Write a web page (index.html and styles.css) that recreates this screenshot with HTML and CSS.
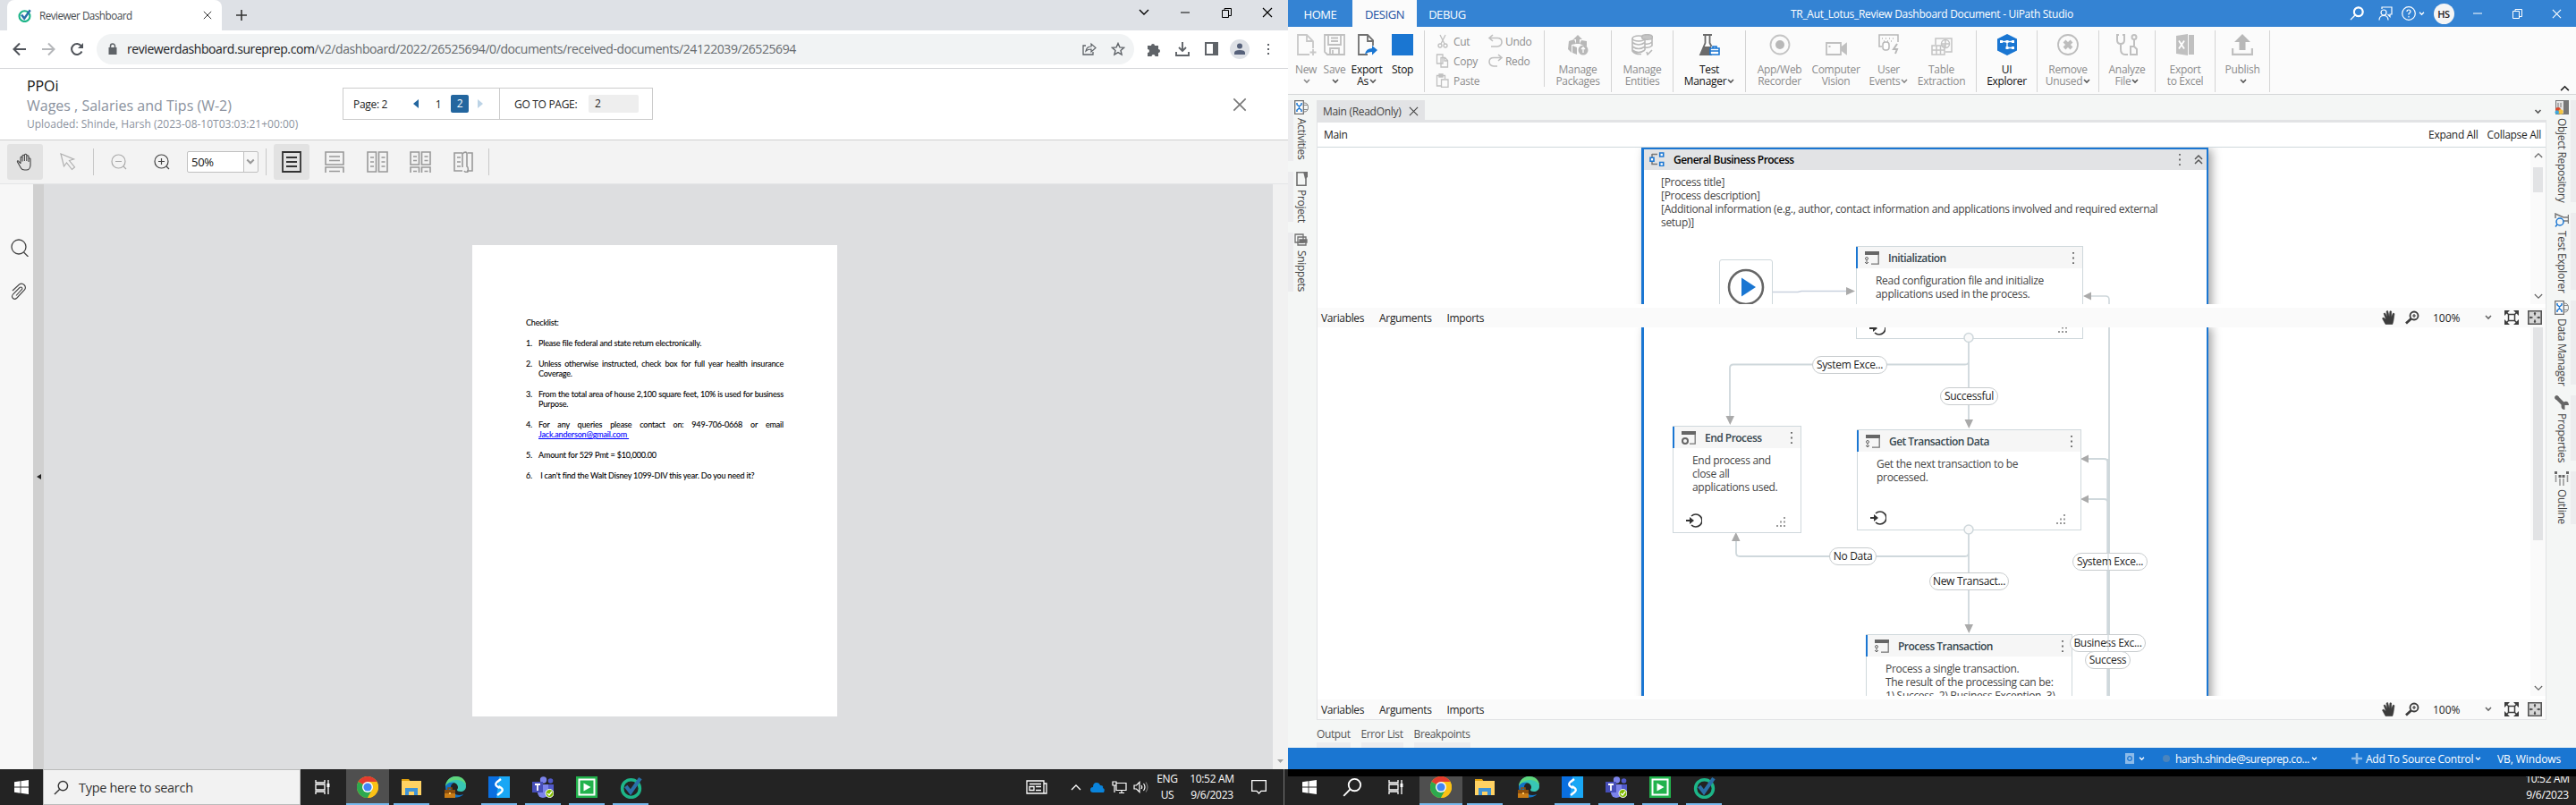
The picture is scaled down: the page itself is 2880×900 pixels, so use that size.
FILE: index.html
```html
<!DOCTYPE html>
<html lang="en">
<head>
<meta charset="utf-8">
<title>Desktop</title>
<link rel="stylesheet" href="styles.css">
</head>
<body>
<svg class="sprite" aria-hidden="true">
  <symbol id="sure" viewBox="0 0 24 24"><circle cx="12" cy="13" r="9.5" fill="none" stroke="#1db588" stroke-width="3.4"/><path d="M6.5 10.5l5 6.5L22 2" fill="none" stroke="#2a6fa8" stroke-width="4"/></symbol>
  <symbol id="win" viewBox="0 0 16 16"><path fill="#fff" d="M0 2.2L6.6 1.3V7.6H0zM7.4 1.2L16 0V7.6H7.4zM0 8.4H6.6V14.7L0 13.8zM7.4 8.4H16V16L7.4 14.8z"/></symbol>
  <symbol id="taskview" viewBox="0 0 18 16"><path d="M1 0v3h10V0M1 16v-3h10v3M1 5h10v6H1zM15 0v16" fill="none" stroke="#fff" stroke-width="1.3"/><path d="M13.5 4h3v4h-3z" fill="#fff"/></symbol>
  <symbol id="chrome" viewBox="0 0 24 24"><circle cx="12" cy="12" r="12" fill="#fbc116"/><path d="M12 12L1.6 6A12 12 0 0 1 22.4 6z" fill="#e33b2e"/><path d="M1.6 6A12 12 0 0 0 12 24L17 15l-5-3z" fill="#2da94f"/><path d="M12 6h10.4A12 12 0 0 1 12 24l5.2-9z" fill="#fbc116"/><circle cx="12" cy="12" r="6" fill="#fff"/><circle cx="12" cy="12" r="4.6" fill="#4285f4"/></symbol>
  <symbol id="folder" viewBox="0 0 24 24"><path d="M1 3h8l2 3H1z" fill="#e0a00c"/><path d="M1 5h22v16H1z" fill="#ffd263"/><path d="M5 21v-8h14v8h-4v-4H9v4z" fill="#3f93d6"/></symbol>
  <symbol id="edge" viewBox="0 0 24 24"><path d="M1 12A11.5 11.500 0 0 1 24 11c0 4-3 6-6 6s-4-1-4-2 1-1 1-3-2-5-6-5-8 3-8 8z" fill="#38c6b4"/><path d="M1 12c0-7 5-12 12-12 6 0 11 4 11 10-2-4-6-6-11-6C7 4 2 8 1 12z" fill="#5fd67c"/><path d="M1 11c2-4 6-5 10-4-4 1-5 5-3 9 2 5 8 6 13 4-3 5-20 7-20-9z" fill="#1273c4"/><path d="M0 15h12v9H0z" fill="#c97c16"/><path d="M0 15h12v4H0z" fill="#8c4f0c"/><path d="M4 15v-2h4v2" fill="none" stroke="#8c4f0c" stroke-width="1.5"/><path d="M5 18h2v2H5z" fill="#ffc45a"/></symbol>
  <symbol id="snag" viewBox="0 0 24 24"><path d="M0 0h24v24H0z" fill="#0a6fe0"/><path d="M12 0h12v24H9z" fill="#19a7f5"/><path d="M14 3l-4.500 3.500q-2.500 2.500 0 4.500l3 2M10 21l4.500-3.500q2.500-2.500 0-4.500l-3-2" fill="none" stroke="#fff" stroke-width="2.400"/></symbol>
  <symbol id="teams" viewBox="0 0 24 24"><circle cx="12.500" cy="4" r="3.700" fill="#7b83eb"/><circle cx="20.500" cy="5" r="2.800" fill="#5059c9"/><path d="M16 9h8v7a4 4 0 0 1-8 2z" fill="#5059c9"/><path d="M6 9h12v9a6 6 0 0 1-12 0z" fill="#7b83eb"/><path d="M0 6h12v12H0z" fill="#464eb8"/><path d="M3 9h6M6 9v7" stroke="#fff" stroke-width="1.800"/><circle cx="19.500" cy="19" r="4.500" fill="#7fba00" stroke="#fff"/><path d="M17 19l2 2 3-4" fill="none" stroke="#fff" stroke-width="1.300"/></symbol>
  <symbol id="play" viewBox="0 0 24 24"><path d="M0 0h24v24H0z" fill="#22b24c"/><path d="M3.500 3.500h17v17h-17z" fill="none" stroke="#fff" stroke-width="2"/><path d="M8.500 7.500l8 4.500-8 4.500z" fill="#fff"/></symbol>
  <symbol id="chev" viewBox="0 0 8 6"><path d="M1 1l3 3 3-3" fill="none" stroke="currentColor" stroke-width="1.600"/></symbol>
  <symbol id="chevbig" viewBox="0 0 12 8"><path d="M1 1l5 5 5-5" fill="none" stroke="currentColor" stroke-width="1.400"/></symbol>
  <symbol id="restore" viewBox="0 0 11 11"><path d="M.5 2.500h7v8h-7zM3 2.500V.5h7.500v8H7.500" fill="none" stroke="currentColor"/></symbol>
  <symbol id="x" viewBox="0 0 12 12"><path d="M1 1l10 10M11 1L1 11" fill="none" stroke="currentColor" stroke-width="1.200"/></symbol>
  <symbol id="lens" viewBox="0 0 18 18"><circle cx="11" cy="7" r="5.500" fill="none" stroke="currentColor" stroke-width="1.500"/><path d="M7 11l-6 6" stroke="currentColor" stroke-width="1.500"/></symbol>
  <symbol id="dots" viewBox="0 0 4 16"><path d="M1 1h2v2H1zM1 7h2v2H1zM1 13h2v2H1z" fill="currentColor"/></symbol>
  <symbol id="state" viewBox="0 0 16 16"><path d="M0 1h16v4H0z" fill="#666"/><path d="M15.200 4v11.200H7" fill="none" stroke="#777" stroke-width="1.300"/><circle cx="2" cy="9" r="1.500" fill="none" stroke="#666"/><path d="M2 10.500v4M0 13l2 2 2-2" fill="none" stroke="#666"/></symbol>
  <symbol id="endstate" viewBox="0 0 16 16"><path d="M0 1h16v4H0z" fill="#666"/><path d="M15.200 4v11.200H9" fill="none" stroke="#777" stroke-width="1.300"/><circle cx="4" cy="12" r="3" fill="none" stroke="#666" stroke-width="2"/></symbol>
  <symbol id="enter" viewBox="0 0 18 16"><path d="M6 3a7 7 0 1 1 0 10" fill="none" stroke="#333" stroke-width="1.600"/><path d="M0 7h4V4l5 4-5 4V9H0z" fill="#333"/></symbol>
  <symbol id="grip" viewBox="0 0 12 12"><path d="M9 0h2v2H9zM9 4.500h2v2H9zM9 9h2v2H9zM5 4.500h2v2H5zM5 9h2v2H5zM1 9h2v2H1z" fill="#999"/></symbol>
  <symbol id="pan" viewBox="0 0 16 16"><path d="M4 15.500L.5 9l1-1 3 2L2 3.500l1.500-.5L6 7.500 5 1l1.600-.4L8.200 7 9 .8l1.600.2-.2 6.500L12.600 3l1.400.7L12.800 12l-1 3.500z" fill="#3c3c3c" stroke="#3c3c3c" stroke-width=".6"/></symbol>
  <symbol id="zoomp" viewBox="0 0 16 16"><circle cx="10" cy="6" r="4.500" fill="none" stroke="#3c3c3c" stroke-width="1.800"/><path d="M8 6h4M10 4v4" stroke="#3c3c3c" stroke-width="1.200"/><path d="M6.500 9.500L1 14.500" stroke="#3c3c3c" stroke-width="2.800"/></symbol>
  <symbol id="fit" viewBox="0 0 16 16"><path d="M4.500 4.500h7v7h-7zM1 1l4 4M15 1l-4 4M1 15l4-4M15 15l-4-4" fill="none" stroke="#3c3c3c" stroke-width="1.500"/><path d="M0 0h6L0 6zM16 0h-6l6 6zM0 16h6l-6-6zM16 16h-6l6-6z" fill="#3c3c3c"/></symbol>
  <symbol id="overview" viewBox="0 0 16 16"><path d="M.8.800h14.400v14.400H.8z" fill="#d6d6d6" stroke="#555" stroke-width="1.600"/><path d="M8 2.500v3M8 10.500v3M2.500 8h3M10.500 8h3" stroke="#3c3c3c" stroke-width="1.500"/><path d="M6.500 3.800h3L8 2zM6.500 12.200h3L8 14zM3.800 6.500v3L2 8zM12.200 6.500v3L14 8z" fill="#3c3c3c"/></symbol>
  <symbol id="data" viewBox="0 0 16 16"><path d="M.7.700h9.600v14.600H.7z" fill="#fff" stroke="#707070" stroke-width="1.300"/><path d="M3 3v2l2.500 2L8 5V3M3 13v-2l2.500-2L8 11v2M5.500 6v4" fill="none" stroke="#1a76d2" stroke-width="1.500"/><path d="M11 3q4.500 0 4.500 5T11 13M11 5.500h4M11 10.500h4" fill="none" stroke="#888"/></symbol>
</svg>

<div class="desktop">
<section class="screen">
  <div class="tabstrip">
    <div class="tab"><svg width="15" height="15"><use href="#sure"/></svg><span>Reviewer Dashboard</span><svg class="tab-x" width="10" height="10"><use href="#x"/></svg></div>
    <svg class="plus" width="12" height="12"><path d="M6 0v12M0 6h12" stroke="#333" stroke-width="1.600"/></svg>
    <div class="wincontrols">
      <i><svg width="12" height="8"><use href="#chevbig"/></svg></i>
      <i><svg width="10" height="2"><path d="M0 1h10" stroke="#000"/></svg></i>
      <i><svg width="11" height="11"><use href="#restore"/></svg></i>
      <i><svg width="12" height="12"><use href="#x"/></svg></i>
    </div>
  </div>
  <div class="address">
    <i><svg width="16" height="16"><path d="M15 8H2M8 1.500L1.500 8 8 14.500" fill="none" stroke="#50545a" stroke-width="2"/></svg></i>
    <i><svg width="16" height="16"><path d="M1 8h13M8 1.500L14.500 8 8 14.500" fill="none" stroke="#b5b7ba" stroke-width="2"/></svg></i>
    <i><svg width="16" height="16"><path d="M13.500 10.500A6 6 0 1 1 13 4.500" fill="none" stroke="#50545a" stroke-width="2"/><path d="M15 1v6H9z" fill="#50545a"/></svg></i>
    <div class="pill">
      <svg width="16" height="14"><path d="M3.500 5h9v8h-9z" fill="#5f6368"/><path d="M5.500 6V3.500a2.500 2.500 0 0 1 5 0V6" fill="none" stroke="#5f6368" stroke-width="1.500"/></svg>
      <span class="url"><b>reviewerdashboard.sureprep.com</b>/v2/dashboard/2022/26525694/0/documents/received-documents/24122039/26525694</span>
      <i><svg width="16" height="15"><path d="M4 4H1v10h11v-3" fill="none" stroke="#5f6368" stroke-width="1.300"/><path d="M4 10q1-5 6-5V2l5 4.500L10 11V8q-4 0-6 2z" fill="none" stroke="#5f6368" stroke-width="1.200"/></svg></i>
      <i><svg width="16" height="16"><path d="M8 1.500l1.900 4.400 4.700.4-3.600 3.100 1.100 4.700L8 11.600l-4.100 2.500L5 9.400 1.400 6.300l4.700-.4z" fill="none" stroke="#5f6368" stroke-width="1.400"/></svg></i>
    </div>
    <i class="first"><svg width="16" height="16"><path d="M1 4h4a2 2 0 1 1 4 0h4v4a2 2 0 1 1 0 4v4H9.500a2 2 0 0 0-4 0H1v-4a2 2 0 0 0 0-4z" fill="#5f6368"/></svg></i>
    <i><svg width="16" height="16"><path d="M8 0v9M4 6l4 4 4-4M1 11v4h14v-4" fill="none" stroke="#5f6368" stroke-width="1.900"/></svg></i>
    <i><svg width="15" height="15"><path d="M1 1h13v13H1z" fill="none" stroke="#5f6368" stroke-width="2"/><path d="M9 1h5v13H9z" fill="#5f6368"/></svg></i>
    <i><svg width="22" height="22"><circle cx="11" cy="11" r="11" fill="#dee1e6"/><circle cx="11" cy="7.500" r="3" fill="#56617a"/><path d="M5 17v-2q0-3 6-3t6 3v2z" fill="#56617a"/></svg></i>
    <i><svg width="4" height="14"><path d="M1 1h2v2H1zM1 6h2v2H1zM1 11h2v2H1z" fill="#5f6368"/></svg></i>
  </div>

  <header class="doc-head">
    <div class="doc-meta"><p class="m1">PPOi</p><p class="m2">Wages , Salaries and Tips (W-2)</p><p class="m3">Uploaded: Shinde, Harsh (2023-08-10T03:03:21+00:00)</p></div>
    <div class="pager">
      <div class="pg"><span class="pl">Page: 2</span><svg width="6" height="10"><path d="M6 0v10L0 5z" fill="#23669f"/></svg><span class="p1">1</span><span class="p2">2</span><svg width="6" height="10"><path d="M0 0v10l6-5z" fill="#bcd3e6"/></svg></div>
      <div class="goto"><span>GO TO PAGE:</span><span class="inp">2</span></div>
    </div>
    <svg class="doc-x" width="16" height="16" viewBox="0 0 12 12"><use href="#x"/></svg>
  </header>

  <div class="viewer-bar">
    <i class="on"><svg width="20" height="20" fill="none" stroke="#444" stroke-width="1.100"><path d="M5 12L2.500 9q-1.500-.5-1 1l4 7q1 2 4 2h2q4 0 4.500-5V6.500q-1.300-1.500-2 0V10M14 8V3.500q-1.200-1.500-2.200 0V9M11.800 4V2q-1.200-1.500-2.400 0v7M9.400 3Q8 1.500 7 3v6.500M7 5Q5.500 3.500 5 5v7"/></svg></i>
    <i><svg width="18" height="20" fill="none" stroke="#b0b0b0" stroke-width="1.200"><path d="M1 1l3.500 14 3-4 6 7.500 3-2.500-6-7.500 5-1.500z"/></svg></i>
    <b></b>
    <i><svg width="18" height="18" fill="none" stroke="#aaa" stroke-width="1.200"><circle cx="8.500" cy="8.500" r="7.500"/><path d="M5 8.500h7M14 14l3 3"/></svg></i>
    <i><svg width="18" height="18" fill="none" stroke="#444" stroke-width="1.200"><circle cx="8.500" cy="8.500" r="7.500"/><path d="M5 8.500h7M8.500 5v7M14 14l3 3"/></svg></i>
    <div class="sel"><span>50%</span><svg width="10" height="8" viewBox="0 0 8 6"><use href="#chev"/></svg></div>
    <b class="b2"></b>
    <i class="on"><svg width="22" height="24" fill="none" stroke="#333" stroke-width="1.800"><path d="M1 1h20v22H1zM5 7h12M5 12h12M5 17h12"/></svg></i>
    <i><svg width="22" height="24" fill="none" stroke="#999" stroke-width="1.600"><path d="M1 1h20v14H1zM5 6h12M5 10.500h12M1 24v-6h20v6M5 22.500h12"/></svg></i>
    <i><svg width="24" height="24" fill="none" stroke="#999" stroke-width="1.600"><path d="M1 1h9.500v22H1zM13.500 1H23v22h-9.500zM4 7h4M4 12h4M4 17h4M16.500 7h4M16.500 12h4M16.500 17h4"/></svg></i>
    <i><svg width="24" height="24" fill="none" stroke="#999" stroke-width="1.600"><path d="M1 1h9.500v14H1zM13.500 1H23v14h-9.500zM4 6h4M4 10.500h4M16.500 6h4M16.500 10.500h4M1 24v-6h9.500v6M13.500 24v-6H23v6M4 22.500h4M16.500 22.500h4"/></svg></i>
    <i><svg width="22" height="24" fill="none" stroke="#999" stroke-width="1.600"><path d="M10 22H1V2h9M4 7h4M4 12h4M4 17h4M10 18V3q3-3 5-1v15q2 1 1 6-3 1-4-1M16 2h5v20h-6"/></svg></i>
    <b class="b3"></b>
  </div>

  <div class="viewer">
    <div class="side">
      <svg width="20" height="20" fill="none" stroke="#444" stroke-width="1.300"><circle cx="9" cy="9" r="8"/><path d="M14.500 15l5 5"/></svg>
      <svg width="18" height="20" fill="none" stroke="#444" stroke-width="1.100"><path d="M2 9L9.500 2q3-2 5.500.5T15.500 8L7 17q-2.500 2.500-4.500.5T2.500 13L10 5.500q1.500-1 2.500.2T12 8l-6 6.500"/></svg>
    </div>
    <div class="splitter"><svg width="5" height="6"><path d="M5 0v6L0 3z" fill="#222"/></svg></div>
    <div class="paper-area">
      <article class="paper">
        <p>Checklist:</p>
        <ol>
          <li><i>1.</i><span>Please file federal and state return electronically.</span></li>
          <li><i>2.</i><span><em>Unless otherwise instructed, check box for full year health insurance</em>Coverage.</span></li>
          <li><i>3.</i><span><em>From the total area of house 2,100 square feet, 10% is used for business</em>Purpose.</span></li>
          <li><i>4.</i><span><em>For any queries please contact on: 949-706-0668 or email</em><a>Jack.anderson@gmail.com&nbsp;</a></span></li>
          <li><i>5.</i><span>Amount for 529 Pmt = $10,000.00</span></li>
          <li><i>6.</i><span>&nbsp;I can't find the Walt Disney 1099-DIV this year. Do you need it?</span></li>
        </ol>
      </article>
    </div>
    <div class="vscroll"><svg width="7" height="4"><path d="M0 0h7L3.500 4z" fill="#a3a3a3"/></svg></div>
  </div>

  <footer class="taskbar">
    <i class="start"><svg width="16" height="16"><use href="#win"/></svg></i>
    <div class="searchbox"><svg width="17" height="17"><use href="#lens"/></svg>Type here to search</div>
    <i class="tv"><svg width="18" height="16"><use href="#taskview"/></svg></i>
    <i class="app cur"><svg width="24" height="24"><use href="#chrome"/></svg></i>
    <i class="app run"><svg width="24" height="24"><use href="#folder"/></svg></i>
    <i class="app"><svg width="24" height="24"><use href="#edge"/></svg></i>
    <i class="app run"><svg width="24" height="24"><use href="#snag"/></svg></i>
    <i class="app run"><svg width="24" height="24"><use href="#teams"/></svg></i>
    <i class="app run"><svg width="24" height="24"><use href="#play"/></svg></i>
    <i class="app run"><svg width="25" height="25"><use href="#sure"/></svg></i>
    <div class="tray">
      <i class="news"><svg width="24" height="16" fill="none" stroke="#fff" stroke-width="1.300"><path d="M1 1h19v14H1zM20 4h3v11h-4M4 4.500h13M4 7.500h5v4H4zM11 7.500h6M11 11.500h6"/></svg></i>
      <i class="t"><svg width="12" height="8"><path d="M1 7l5-5 5 5" fill="none" stroke="#fff" stroke-width="1.300"/></svg></i>
      <i class="t"><svg width="17" height="12"><path d="M3 12a3 3 0 0 1 0-6Q3 1 7 1q3 0 4 3 4 0 3 3 3 1 1 5z" fill="#0a84dc"/></svg></i>
      <i class="t"><svg width="17" height="14" fill="none" stroke="#fff" stroke-width="1.200"><path d="M5 2.500h11v8H5zM8 13.500h6M11 10.500v3M1 1h4v4H1zM3 5v8"/></svg></i>
      <i class="t"><svg width="17" height="14" fill="none" stroke="#fff" stroke-width="1.200"><path d="M1 5h2.500L7 1.500v11L3.500 9H1zM9 5q1.500 2 0 4M11.500 3q3 4 0 8"/><path d="M14 1.500q4 5.500 0 11" stroke="#777"/></svg></i>
      <div class="lang">ENG<br>US</div>
      <div class="clock">10:52 AM<br>9/6/2023</div>
      <i class="note"><svg width="17" height="16"><path d="M.7.700h15.600v11.600H11L8.500 15 6 12.300H.7z" fill="none" stroke="#fff" stroke-width="1.300"/></svg></i>
    </div>
  </footer>
</section>

<section class="screen studio">
  <div class="titlebar">
    <span class="mt">HOME</span><span class="mt sel-tab">DESIGN</span><span class="mt debug">DEBUG</span>
    <span class="title">TR_Aut_Lotus_Review Dashboard Document - UiPath Studio</span>
    <i class="w38"><svg width="16" height="16" viewBox="0 0 18 18"><use href="#lens"/><circle cx="11" cy="7" r="5.500" fill="none" stroke="#fff" stroke-width="2.400"/></svg></i>
    <i class="w26"><svg width="16" height="16" fill="none" stroke="#fff" stroke-width="1.200"><circle cx="6" cy="7" r="3"/><path d="M1 15.500q0-5 5-5t5 5M4 3V1h11v8h-2v2.500L10.500 9"/></svg></i>
    <i class="w36"><svg width="16" height="16" fill="none" stroke="#fff" stroke-width="1.200"><circle cx="8" cy="8" r="7.300"/><path d="M6 6q0-2 2-2t2 2q0 1.200-2 2.200v1.300M8 11v1.500"/></svg><svg width="7" height="5" viewBox="0 0 8 6"><use href="#chev"/></svg></i>
    <i class="w32"><span class="avatar">HS</span></i>
    <i class="w44"><svg width="10" height="2"><path d="M0 1h10" stroke="#fff"/></svg></i>
    <i class="w44"><svg width="11" height="11"><use href="#restore"/></svg></i>
    <i class="w44"><svg width="11" height="11" viewBox="0 0 12 12"><use href="#x"/></svg></i>
  </div>

  <div class="ribbon">
    <div class="grp g1">
      <div class="it w32"><svg width="24" height="24" fill="none" stroke="#c8c8c8" stroke-width="1.800"><path d="M16 23H3V1h10l7 7v8M13 1v7h7M20 17v7M16.500 20.500h7"/></svg><p>New<br><svg class="cv" width="8" height="6"><use href="#chev"/></svg></p></div>
      <div class="it w32"><svg width="24" height="24" fill="none" stroke="#c0c0c0" stroke-width="1.800"><path d="M1 1h22v22H4l-3-3zM5 1v11h14V1M8 4.500h8M8 8h8M7 23v-7h10v7M10 18v4"/></svg><p>Save<br><svg class="cv dk" width="8" height="6"><use href="#chev"/></svg></p></div>
      <div class="it blk w40"><svg width="24" height="24"><path d="M13 23H3V1h10l6 6v6M13 1v7h7" fill="none" stroke="#707070" stroke-width="1.800"/><path d="M10 23q1-7 8-7v-3l6 5-6 5.500V20q-5 0-8 3z" fill="#1a76d2"/></svg><p>Export<br>As<svg class="cv dk" width="8" height="6"><use href="#chev"/></svg></p></div>
      <div class="it blk w40"><svg width="24" height="24"><path d="M0 0h24v24H0z" fill="#1a76d2"/></svg><p>Stop</p></div>
    </div>
    <div class="grp clip">
      <div class="ccol">
        <p><svg width="16" height="16" fill="none" stroke="#c0c0c0" stroke-width="1.300"><path d="M5 1l5 10M11 1L6 11"/><circle cx="5" cy="13" r="2"/><circle cx="11" cy="13" r="2"/></svg>Cut</p>
        <p><svg width="16" height="16" fill="none" stroke="#c0c0c0" stroke-width="1.300"><path d="M1.500 1H8v10H1.500zM6 4.500h4.500l3 3V15H6zM10 5v3h4"/></svg>Copy</p>
        <p><svg width="16" height="16" fill="none" stroke="#c0c0c0" stroke-width="1.300"><path d="M6 14H1.500V2.500h9V6M4 1h4v3H4zM6.500 7H14v8.500H6.500z"/></svg>Paste</p>
      </div>
      <div class="ccol">
        <p><svg width="18" height="16" fill="none" stroke="#c0c0c0" stroke-width="1.600"><path d="M6 1L2 4.500 6 8M2 4.500h9q5 0 5 4.500t-5 5H4"/></svg>Undo</p>
        <p><svg width="18" height="16" fill="none" stroke="#c0c0c0" stroke-width="1.600"><path d="M12 1l4 3.500L12 8M16 4.500H7q-5 0-5 4.500t5 5h4"/></svg>Redo</p>
      </div>
    </div>
    <div class="grp g75"><div class="it"><svg width="24" height="24"><path d="M12 1l5 5h-3v5h-4V6H7zM2 8l6-2 2 5-5 1v9l-4-4zM22 8l-6-1-2 4 5 2 3 1zM6 13l5 2v8l-5-2z" fill="#b8b8b8"/><circle cx="18" cy="18" r="5.500" fill="#b8b8b8"/><path d="M18 21v-6M16 17l2-2 2 2" stroke="#fff" fill="none" stroke-width="1.300"/></svg><p>Manage<br>Packages</p></div></div>
    <div class="grp g69"><div class="it"><svg width="24" height="24" fill="none" stroke="#b8b8b8" stroke-width="1.600"><ellipse cx="8" cy="5" rx="7" ry="3"/><ellipse cx="17.500" cy="3.500" rx="6" ry="2.800" fill="#c4c4c4"/><path d="M1 5v14q3 4 10 3.500M15 5v13M1 9.500q7 5 14 0M1 14q7 5 14 0M1 18q7 5 14 0M23 5v4q-3 3-8 2M23 9v4q-3 3-8 2M17 20l1 3 5-5"/></svg><p>Manage<br>Entities</p></div></div>
    <div class="grp g81"><div class="it blk"><svg width="24" height="24"><path d="M5 1h10M7.500 1v9L2 23h13M12.500 1v9l2 4" fill="none" stroke="#6b6b6b" stroke-width="1.800"/><path d="M6 14h8v9H2z" fill="#6b6b6b"/><path d="M13 16h10v7H13zM16 16v-2h4v2M13 19h10" fill="#fff" stroke="#1a76d2" stroke-width="1.600"/></svg><p>Test<br>Manager<svg class="cv dk" width="8" height="6"><use href="#chev"/></svg></p></div></div>
    <div class="grp g258">
      <div class="it w60"><svg width="24" height="24"><circle cx="12" cy="12" r="10.500" fill="none" stroke="#c4c4c4" stroke-width="1.800"/><circle cx="12" cy="12" r="5" fill="#b8b8b8"/></svg><p>App/Web<br>Recorder</p></div>
      <div class="it w64"><svg width="24" height="24" fill="none" stroke="#c0c0c0" stroke-width="1.800"><path d="M1 10h16v13H1zM3.500 14h2"/><path d="M18 15l5-4v11l-5-4z" fill="#c0c0c0"/></svg><p>Computer<br>Vision</p></div>
      <div class="it w56"><svg width="24" height="24" fill="none" stroke="#b8b8b8" stroke-width="1.500"><path d="M4 14H1V1h21v8M4 5h1M8 5h1M12 5h1M16 5h1M6 8h1M10 8h1M14 8h1"/><rect x="5" y="9" width="7" height="9" rx="3" fill="#fff"/><path d="M21 11l-4 6h4l-2 5" stroke-width="2"/></svg><p>User<br>Events<svg class="cv" width="8" height="6"><use href="#chev"/></svg></p></div>
      <div class="it w64"><svg width="24" height="24" fill="none" stroke="#c4c4c4" stroke-width="1.500"><path d="M5 12V5h18v15h-7M1 13h14v10H1zM1 18h14M6 13v10M10.500 13v10"/><circle cx="16" cy="11" r="4.500"/><path d="M11.500 11h9M16 6.500v9"/></svg><p>Table<br>Extraction</p></div>
    </div>
    <div class="grp g68"><div class="it blk"><svg width="24" height="24"><path d="M12 0l11 5.500v13L12 24 1 18.500v-13z" fill="#1a76d2"/><path d="M5 8.500h14M12 8.500v7h7" fill="none" stroke="#fff" stroke-width="1.300"/><path d="M4 7h3v3H4zM10.500 7h3v3h-3zM17 7h3v3h-3zM10.500 14h3v3h-3zM17 14h3v3h-3z" fill="#fff"/></svg><p>UI<br>Explorer</p></div></div>
    <div class="grp g69"><div class="it"><svg width="24" height="24" fill="none" stroke="#bdbdbd" stroke-width="1.800"><circle cx="12" cy="12" r="11"/><path d="M8 8l8 8M16 8l-8 8" stroke-width="4"/></svg><p>Remove<br>Unused<svg class="cv dk" width="8" height="6"><use href="#chev"/></svg></p></div></div>
    <div class="grp g63"><div class="it"><svg width="24" height="24" fill="none" stroke="#c0c0c0" stroke-width="2"><path d="M3 1H1v6q0 4 4 4t4-4V1H7M5 11v6q0 6 5 6h3M20 6v7"/><circle cx="20" cy="3.500" r="2.500"/><path d="M16 14h4l3 3v6h-7z"/></svg><p>Analyze<br>File<svg class="cv dk" width="8" height="6"><use href="#chev"/></svg></p></div></div>
    <div class="grp g67"><div class="it"><svg width="24" height="24"><path d="M2 2l13-2v24L2 22zM16 1h6v22h-6z" fill="#c0c0c0"/><path d="M5 7.500l6 9M11 7.500l-6 9" stroke="#fff" stroke-width="1.800"/></svg><p>Export<br>to Excel</p></div></div>
    <div class="grp g61"><div class="it"><svg width="24" height="24"><path d="M12 0l9 9h-5.500v9h-7V9H3z" fill="#b8b8b8"/><path d="M1 16v7h22v-7" fill="none" stroke="#c0c0c0" stroke-width="2.400"/></svg><p>Publish<br><svg class="cv dk" width="8" height="6"><use href="#chev"/></svg></p></div></div>
    <svg class="collapse" width="11" height="7" viewBox="0 0 12 8"><path d="M1 7l5-5 5 5" fill="none" stroke="#222" stroke-width="1.800"/></svg>
  </div>

  <div class="work">
    <aside class="strip left">
      <div class="h68"><svg width="16" height="16"><use href="#data"/></svg><span>Activities</span></div>
      <div class="h56"><svg width="14" height="16"><path d="M2 .8h10v14.400H2z" fill="none" stroke="#707070" stroke-width="1.600"/><path d="M9 0h5v6l-3 2z" fill="#707070"/></svg><span>Project</span></div>
      <div class="h66"><svg width="16" height="16" fill="none" stroke="#707070" stroke-width="1.300"><path d="M1 2h9v9H1zM4 5h9v9H4z"/><path d="M6 8h8v3H6z" fill="#707070"/></svg><span>Snippets</span></div>
    </aside>
    <main class="center">
      <div class="doctabs"><div class="doctab">Main (ReadOnly)<svg width="11" height="11" viewBox="0 0 12 12"><use href="#x"/></svg></div><svg class="dd" width="9" height="6" viewBox="0 0 8 6"><use href="#chev"/></svg></div>
      <div class="panel">
        <div class="crumb"><span>Main</span><span class="ea">Expand All</span><span>Collapse All</span></div>
        <div class="canvas top">
          <div class="flow">
            <div class="flow-head"><svg width="17" height="16" fill="none"><path d="M9 2.500H3M3 6v-4M3 10v3.500h6" stroke="#777" stroke-width="1.500"/><path d="M11.700 1h4v4h-4zM11.700 11.500h4v4h-4zM1 6.200h4v4H1z" stroke="#1a76d2" stroke-width="1.600" fill="#fff"/></svg><strong>General Business Process</strong><svg class="dots" width="4" height="15"><use href="#dots"/></svg><svg width="10" height="12" fill="none" stroke="#555" stroke-width="1.500"><path d="M1 6l4-4 4 4M1 11l4-4 4 4"/></svg></div>
            <p class="desc">[Process title]<br>[Process description]<br>[Additional information (e.g., author, contact information and applications involved and required external<br>setup)]</p>
            <svg class="wires" width="629" height="173" viewBox="1838 167 629 173" fill="none" stroke="#c9d1de" stroke-width="1.600"><path d="M1982 326.500h28l4-1h52"/><path d="M2336 331h18q4 0 4 4v8" stroke="#cfd8dc"/><path d="M2064 321v9l10-4.500zM2338 326.500v9l-9-4.500z" fill="#aaa" stroke="none"/></svg>
            <div class="playbox"><svg width="42" height="42"><circle cx="21" cy="21" r="19" fill="#fff" stroke="#666" stroke-width="2.600"/><path d="M16 10.500v21L32 21z" fill="#1a76d2"/></svg></div>
            <div class="node n-init"><header><svg width="16" height="16"><use href="#state"/></svg>Initialization<svg class="dots" width="4" height="15"><use href="#dots"/></svg></header><p>Read configuration file and initialize<br>applications used in the process.</p></div>
          </div>
          <div class="sbar"><svg width="10" height="7" viewBox="0 0 12 8"><path d="M1 7l5-5 5 5" fill="none" stroke="#666" stroke-width="1.500"/></svg><b></b><svg class="dn" width="10" height="7" viewBox="0 0 12 8"><use href="#chevbig"/></svg></div>
        </div>
        <div class="vars first-vars"><span>Variables</span><span>Arguments</span><span>Imports</span><div class="zoomset"><svg width="16" height="16"><use href="#pan"/></svg><svg width="16" height="16"><use href="#zoomp"/></svg><em>100%</em><svg class="zc" width="8" height="6"><use href="#chev"/></svg><svg width="16" height="16"><use href="#fit"/></svg><svg width="16" height="16"><use href="#overview"/></svg></div></div>
        <div class="canvas bottom">
          <div class="flow cont">
            <svg class="wires" width="629" height="412" viewBox="1838 366 629 412" fill="none" stroke="#cfd8dc" stroke-width="1.800"><path d="M2201 380v90M2201 404q0 3.500-4 3.500H1938q-4 0-4 4V466M2201 595v104M2201 618q0 4-4 4H1945q-4 0-4-4v-14M2358 366v412M2334 513h18q5 0 5 5M2334 558h18q5 0 5 5"/><path d="M2357 513v265" stroke-width="3.400"/><path d="M1929.500 465h9.500l-4.700 10zM2196.500 469h9.500l-4.700 10zM2196.500 698h9.500l-4.700 10zM1936 605h9.500l-4.700-10zM2335 508.500v9l-9-4.500zM2335 553.500v9l-9-4.500z" fill="#aaa" stroke="none"/></svg>
            <div class="node n-tail"><svg class="ret" width="18" height="16"><use href="#enter"/></svg><svg class="gr" width="12" height="12"><use href="#grip"/></svg></div>
            <div class="node n-end"><header><svg width="16" height="16"><use href="#endstate"/></svg>End Process<svg class="dots" width="4" height="15"><use href="#dots"/></svg></header><p>End process and<br>close all<br>applications used.</p><svg class="ret" width="18" height="16"><use href="#enter"/></svg><svg class="gr" width="12" height="12"><use href="#grip"/></svg></div>
            <div class="node n-get"><header><svg width="16" height="16"><use href="#state"/></svg>Get Transaction Data<svg class="dots" width="4" height="15"><use href="#dots"/></svg></header><p>Get the next transaction to be<br>processed.</p><svg class="ret" width="18" height="16"><use href="#enter"/></svg><svg class="gr" width="12" height="12"><use href="#grip"/></svg></div>
            <div class="node n-proc"><header><svg width="16" height="16"><use href="#state"/></svg>Process Transaction<svg class="dots" width="4" height="15"><use href="#dots"/></svg></header><p>Process a single transaction.<br>The result of the processing can be:<br>1) Success, 2) Business Exception, 3)</p></div>
            <span class="lb l1">System Exce...</span><span class="lb l2">Successful</span><span class="lb l3">No Data</span><span class="lb l4">New Transact...</span><span class="lb l5">System Exce...</span><span class="lb l6">Business Exc...</span><span class="lb l7">Success</span>
            <svg class="wires" width="629" height="412" viewBox="1838 366 629 412" fill="#fafafa" stroke="#cfd8dc" stroke-width="1.500"><circle cx="2201" cy="377.500" r="5"/><circle cx="2201" cy="592" r="5"/><path d="M2357 618v20M2357 709v20" stroke-width="1.200"/></svg>
          </div>
          <div class="sbar"><b class="long"></b><svg class="dn" width="10" height="7" viewBox="0 0 12 8"><use href="#chevbig"/></svg></div>
        </div>
        <div class="vars"><span>Variables</span><span>Arguments</span><span>Imports</span><div class="zoomset"><svg width="16" height="16"><use href="#pan"/></svg><svg width="16" height="16"><use href="#zoomp"/></svg><em>100%</em><svg class="zc" width="8" height="6"><use href="#chev"/></svg><svg width="16" height="16"><use href="#fit"/></svg><svg width="16" height="16"><use href="#overview"/></svg></div></div>
      </div>
      <div class="outs"><span>Output</span><span>Error List</span><span>Breakpoints</span></div>
    </main>
    <aside class="strip right">
      <div class="h114"><svg width="16" height="16"><path d="M1 0h15v16H1z" fill="#777"/><path d="M2 1h8v14H2z" fill="#e5e5e5"/><path d="M4 3v5M7 3v5" stroke="#777"/><circle cx="4" cy="11" r="3" fill="#d9482b"/><circle cx="7" cy="13" r="2.700" fill="#f4c542"/><circle cx="2.700" cy="13.500" r="2.200" fill="#3fa9dc"/></svg><span>Object Repository</span></div>
      <div class="h86"><svg width="16" height="16" fill="none"><path d="M15.500 2v10M10 5h5M10 9h5M10 5L1 1v5" stroke="#777" stroke-width="1.500"/><circle cx="6" cy="10" r="4" stroke="#1a76d2" stroke-width="1.500"/><path d="M3 13l-2 2.500" stroke="#1a76d2" stroke-width="1.500"/></svg><span>Test Explorer</span></div>
      <div class="h94"><svg width="16" height="16"><use href="#data"/></svg><span>Data Manager</span></div>
      <div class="h73"><svg width="16" height="16"><path d="M2 2l9 9" stroke="#666" stroke-width="4"/><path d="M16 11h-4.500v5q-4 0-4-4t4-5 4.500 4zM0 2q2-4 5 0L2 5q-2-1-2-3z" fill="#666"/></svg><span>Properties</span></div>
      <div class="h59"><svg width="16" height="16"><path d="M0 0h3v3H0zM13 0h3v3h-3zM4.500 4h3v3h-3zM8.500 4h3v3h-3z" fill="#666"/><path d="M1.500 4v8M6 8v8M10 8v8M14.500 4v8" stroke="#999" stroke-width="1.600"/></svg><span>Outline</span></div>
    </aside>
  </div>

  <div class="status">
    <svg width="10" height="12"><path d="M0 0h10v12H0z" fill="#8dbbe9"/><circle cx="5" cy="6" r="2.300" fill="none" stroke="#1a76d2" stroke-width="1.300"/></svg><svg class="c c1" width="7" height="5" viewBox="0 0 8 6"><use href="#chev"/></svg>
    <svg class="dot" width="8" height="8"><circle cx="4" cy="4" r="4" fill="#4a84bd"/></svg><span class="s1">harsh.shinde@sureprep.co...</span><svg class="c" width="7" height="5" viewBox="0 0 8 6"><use href="#chev"/></svg>
    <svg class="add" width="12" height="12"><path d="M6 0v12M0 6h12" stroke="#8dbbe9" stroke-width="2.600"/></svg><span class="s2">Add To Source Control</span><svg class="c" width="7" height="5" viewBox="0 0 8 6"><use href="#chev"/></svg>
    <span class="s3">VB, Windows</span>
  </div>
  <div class="gap"></div>
  <footer class="taskbar second">
    <i class="start"><svg width="16" height="16"><use href="#win"/></svg></i>
    <i class="find"><svg width="22" height="22" viewBox="0 0 18 18"><use href="#lens"/></svg></i>
    <i class="tv"><svg width="18" height="16"><use href="#taskview"/></svg></i>
    <i class="app cur"><svg width="24" height="24"><use href="#chrome"/></svg></i>
    <i class="app run"><svg width="24" height="24"><use href="#folder"/></svg></i>
    <i class="app"><svg width="24" height="24"><use href="#edge"/></svg></i>
    <i class="app run"><svg width="24" height="24"><use href="#snag"/></svg></i>
    <i class="app run"><svg width="24" height="24"><use href="#teams"/></svg></i>
    <i class="app run"><svg width="24" height="24"><use href="#play"/></svg></i>
    <i class="app run"><svg width="25" height="25"><use href="#sure"/></svg></i>
    <div class="clock">10:52 AM<br>9/6/2023</div>
  </footer>
</section>
</div>
</body>
</html>
```

FILE: styles.css
```css
* { box-sizing: border-box; }
body { margin: 0; font: 12px/15px "Open Sans", "Noto Sans", sans-serif; font-stretch: 94%; letter-spacing: -.3px; color: #222; background: #232323; }
p, ol { margin: 0; padding: 0; }
i, em { font-style: normal; }
svg { flex: none; display: block; }
.sprite { display: none; }
.desktop { display: flex; width: 2880px; height: 900px; overflow: hidden; }
.screen { width: 1440px; height: 900px; display: flex; flex-direction: column; flex: none; overflow: hidden; white-space: nowrap; }
.screen > * { flex: none; }

/* browser chrome */
.tabstrip { height: 34px; background: #dee1e6; display: flex; }
.tab { margin-left: 8px; width: 240px; height: 34px; background: #fff; border-radius: 8px 8px 0 0; display: flex; align-items: center; padding: 0 11px 0 12px; color: #45494d; }
.tab span { margin-left: 9px; flex: 1; letter-spacing: -.52px; font-size: 11.700px; }
.tab-x { color: #333; stroke-width: 2; }
.plus { margin: 11px 0 0 16px; }
.wincontrols { margin-left: auto; display: flex; height: 28px; color: #000; }
.wincontrols i { width: 46px; display: flex; align-items: center; justify-content: center; }
.address { height: 43px; padding: 0 10px 1px; background: #fff; border-bottom: 1px solid #d5d7da; display: flex; align-items: center; gap: 8px; }
.address i { width: 24px; height: 24px; display: flex; align-items: center; justify-content: center; flex: none; }
.pill { margin-left: 2px; width: 1160px; height: 34px; border-radius: 17px; background: #f1f3f4; display: flex; align-items: center; gap: 8px; padding: 0 6px 0 10px; flex: none; }
.url { flex: 1; font-size: 14px; letter-spacing: -.42px; color: #666a6e; }
.url b { font-weight: 400; color: #202124; }
.address .first { margin-left: 2px; }

/* document header */
.doc-head { height: 80px; background: #fff; border-bottom: 1px solid #cfcfcf; display: flex; align-items: center; }
.doc-meta { width: 383px; padding-left: 30px; height: 100%; padding-top: 9px; color: #8b929e; }
.doc-meta .m1 { font-size: 16px; line-height: 21px; color: #111; letter-spacing: -.1px; }
.doc-meta .m2 { font-size: 16px; line-height: 23px; letter-spacing: 0; }
.doc-meta .m3 { font-size: 12px; line-height: 18px; letter-spacing: 0; }
.pager { width: 347px; height: 36px; border: 1px solid #ccc; display: flex; color: #222; margin-bottom: 1px; }
.pg { width: 175px; border-right: 1px solid #ccc; display: flex; align-items: center; padding-left: 11px; }
.pg .pl { width: 67px; }
.pg .p1 { width: 44px; text-align: center; }
.pg .p2 { width: 20px; height: 20px; line-height: 20px; background: #23669f; color: #fff; text-align: center; border-radius: 2px; margin: 0 10px 0 -8px; }
.goto { display: flex; align-items: center; padding-left: 16px; }
.goto span:first-child { width: 83px; }
.inp { width: 56px; height: 20px; line-height: 20px; padding-left: 7px; background: #eee; border-radius: 2px; }
.doc-x { margin-left: 648px; color: #777; }

/* viewer toolbar */
.viewer-bar { height: 49px; background: #f3f3f3; border-bottom: 1px solid #e4e5e7; display: flex; align-items: center; padding-left: 8px; }
.viewer-bar i { width: 40px; height: 40px; margin-right: 8px; display: flex; align-items: center; justify-content: center; border-radius: 3px; flex: none; }
.viewer-bar .on { background: #e2e2e2; }
.viewer-bar b { width: 1px; height: 30px; background: #c8c8c8; margin-right: 8px; }
.viewer-bar .b2 { margin-left: 8px; }
.viewer-bar .b3 { margin-left: 0; }
.sel { width: 80px; height: 24px; border: 1px solid #c0c0c0; border-radius: 2px; background: linear-gradient(90deg, #fff 62px, #c0c0c0 62px, #c0c0c0 63px, #f6f6f6 63px); display: flex; align-items: center; justify-content: space-between; padding: 0 3px 0 4px; font-size: 13px; color: #111; }
.sel svg { color: #999; }

/* viewer body */
.viewer { height: 654px; display: flex; background: #dddee0; }
.side { width: 37px; background: #f7f7f7; padding: 61px 0 0 12px; display: flex; flex-direction: column; gap: 29px; }
.splitter { width: 12px; background: #d0d0d0; padding: 324px 0 0 4px; }
.paper-area { width: 1374px; padding: 68px 0 0 479px; }
.paper { width: 408px; height: 527px; background: #fff; padding: 81px 60px 0; font: 9px/11px Lato, sans-serif; letter-spacing: -.17px; color: #000; -webkit-text-stroke: .1px #000; }
.paper ol { list-style: none; margin-top: 12px; width: 288px; }
.paper li { display: flex; margin-bottom: 12px; }
.paper li i { width: 14px; }
.paper li span { width: 274px; }
.paper em { display: block; text-align-last: justify; }
.paper a { color: #00f; text-decoration: underline; -webkit-text-stroke: .1px #00f; }
.vscroll { width: 17px; background: #f1f1f1; display: flex; justify-content: center; align-items: flex-end; padding-bottom: 7px; }

/* taskbars */
.taskbar { height: 40px; width: 1436px; background: #232323; display: flex; color: #fff; border-right: 1px solid #777; }
.taskbar i { display: flex; align-items: center; justify-content: center; flex: none; }
.start { width: 48px; }
.searchbox { width: 288px; height: 40px; background: #f2f2f2; border: 1px solid #bbb; color: #333; display: flex; align-items: center; gap: 11px; padding-left: 11px; font-size: 14.500px; }
.tv { width: 51px; padding-right: 2px; }
.app { width: 48px; margin-right: 1px; }
.cur { background: #4f4f4f; box-shadow: inset 0 -2px #76b9ed; }
.run { background: linear-gradient(#76b9ed, #76b9ed) 4px 100% / 40px 2px no-repeat; }
.tray { margin-left: auto; display: flex; align-items: center; line-height: 18px; text-align: center; }
.news { width: 64px; }
.t { width: 24px; }
.lang { width: 36px; }
.clock { width: 64px; text-align: center; line-height: 18px; }
.note { width: 48px; padding-right: 8px; }

/* studio */
.titlebar { height: 30px; background: #3483d3; color: #fff; display: flex; align-items: center; }
.titlebar i { height: 30px; display: flex; align-items: center; justify-content: center; flex: none; gap: 3px; }
.mt { width: 72px; height: 30px; line-height: 32px; text-align: center; font-size: 13px; letter-spacing: -.45px; }
.sel-tab { background: #fbfbfb; color: #1a4fa0; }
.mt.debug { width: 68px; }
.title { flex: 1; padding-left: 350px; letter-spacing: -.3px; }
.w26 { width: 26px; } .w32 { width: 32px; } .w36 { width: 36px; } .w38 { width: 38px; } .w40 { width: 40px; } .w44 { width: 44px; } .w56 { width: 54px; } .w60 { width: 62px; } .w64 { width: 64px; }
.avatar { width: 23px; height: 23px; border-radius: 50%; background: #f5f5f5; color: #222; line-height: 23px; text-align: center; font-size: 11px; font-weight: 600; }
.ribbon { height: 76px; background: #fbfbfb; border-bottom: 1px solid #d4d6d8; display: flex; padding-top: 4px; color: #8c8c8c; }
.grp { height: 69px; border-right: 1px solid #d4d4d4; display: flex; justify-content: center; flex: none; }
.it { display: flex; flex-direction: column; align-items: center; padding-top: 4px; text-align: center; flex: none; }
.it p { margin-top: 9px; line-height: 13px; }
.blk { color: #111; }
.cv { display: inline-block; color: #888; margin-left: 1px; vertical-align: 1px; }
.cv.dk { color: #555; }
.g1 { width: 153px; justify-content: flex-start; padding-left: 4px; }
.clip { width: 134px; height: 63px; justify-content: flex-start; padding-left: 12px; }
.ccol { width: 58px; padding-top: 1px; }
.ccol p { display: flex; align-items: center; gap: 4px; height: 22px; }
.ccol + .ccol p { gap: 2px; }
.g75 { width: 75px; } .g69 { width: 69px; } .g81 { width: 81px; } .g68 { width: 68px; } .g63 { width: 63px; } .g67 { width: 67px; } .g61 { width: 61px; }
.g258 { width: 258px; }
.collapse { margin: 61px 7px 0 auto; }

.work { height: 730px; background: #f4f6f5; display: flex; }
.strip { width: 32px; padding-top: 6px; display: flex; flex-direction: column; gap: 12px; color: #444; }
.strip div { display: flex; flex-direction: column; align-items: center; gap: 4px; flex: none; }
.strip span { writing-mode: vertical-rl; line-height: 16px; }
.left div { border-left: 6px solid #ececee; padding-right: 8px; }
.right { padding-left: 7px; width: 33px; }
.right div { border-right: 6px solid #ececee; }
.h68 { height: 68px; } .h56 { height: 56px; } .h66 { height: 66px; } .h114 { height: 114px; } .h86 { height: 86px; } .h94 { height: 94px; } .h73 { height: 73px; } .h59 { height: 59px; }
.center { width: 1375px; }
.doctabs { height: 31px; border-bottom: 3px solid #e2e3e5; padding-top: 6px; display: flex; }
.doctab { width: 121px; height: 25px; background: #e2e3e5; padding: 0 7px; display: flex; align-items: center; justify-content: space-between; color: #444; }
.dd { margin: 10px 5px 0 auto; color: #555; }
.panel { height: 668px; background: #fff; border: solid #e2e3e5; border-width: 0 1px 1px; }
.crumb { height: 28px; border-bottom: 1px solid #cfd8dc; display: flex; align-items: center; padding: 0 5px 0 7px; gap: 10px; }
.crumb .ea { margin-left: auto; }
.canvas { position: relative; overflow: hidden; display: flex; }
.canvas.top { height: 175px; margin-bottom: 4px; }
.canvas.bottom { height: 412px; margin-bottom: 4px; }
.flow { position: relative; margin-left: 362px; width: 634px; height: 300px; border: solid #1a76d2; border-width: 2px 2px 0 3px; box-shadow: 4px 2px 10px rgba(0,0,0,.35); background: #fff; flex: none; }
.flow.cont { border-top: 0; height: 440px; box-shadow: 4px 0 10px rgba(0,0,0,.35); }
.flow-head { height: 23px; background: #e2e3e5; display: flex; align-items: center; padding: 0 4px 1px 6px; color: #000; }
.flow-head strong { margin-left: 10px; font-weight: 600; letter-spacing: -.53px; }
.flow-head .dots { margin: 0 14px 0 auto; }
.dots { color: #666; }
.desc { padding: 6px 0 0 19px; color: #444; }
.wires { position: absolute; left: 0; top: 0; }
.playbox { position: absolute; left: 84px; top: 123px; width: 60px; height: 62px; border: 1px solid #cfd8dc; border-radius: 3px; padding: 9px 8px; background: #fff; }
.node { position: absolute; background: #fff; border: 1px solid #cfd8dc; color: #444; }
.node header { height: 24px; margin-left: -1px; background: #f6f6f6; border-left: 2px solid #1a76d2; display: flex; align-items: center; gap: 10px; padding: 0 8px; font-weight: 600; letter-spacing: -.53px; color: #37474f; }
.node header .dots { margin-left: auto; }
.node p { padding: 6px 0 0 21px; }
.n-init { left: 237px; top: 108px; width: 254px; height: 104px; }
.n-tail { left: 237px; top: -4px; width: 254px; height: 17px; }
.n-end { left: 32px; top: 110px; width: 144px; height: 120px; }
.n-get { left: 238px; top: 114px; width: 251px; height: 113px; }
.n-proc { left: 248px; top: 343px; width: 231px; height: 104px; }
.ret { position: absolute; left: 14px; bottom: 5px; }
.gr { position: absolute; right: 16px; bottom: 5px; }
.n-tail .ret { bottom: 3px; }
.lb { position: absolute; height: 20px; line-height: 17px; border: 1px solid #c8ccce; border-radius: 10px; background: #fff; text-align: center; color: #222; }
.l1 { left: 188px; top: 32px; width: 84px; }
.l2 { left: 331px; top: 67px; width: 65px; }
.l3 { left: 207px; top: 246px; width: 53px; }
.l4 { left: 319px; top: 274px; width: 89px; }
.l5 { left: 479px; top: 252px; width: 84px; }
.l6 { left: 476px; top: 343px; width: 85px; }
.l7 { left: 493px; top: 362px; width: 51px; }
.sbar { margin-left: auto; width: 17px; background: #fafafa; display: flex; flex-direction: column; align-items: center; padding: 5px 0; color: #666; }
.sbar b { width: 11px; height: 28px; margin-top: 10px; background: #e2e3e5; }
.sbar .long { height: 238px; margin-top: -5px; }
.sbar .dn { margin-top: auto; }
.vars { height: 22px; background: #fafafa; display: flex; align-items: center; gap: 17px; padding-left: 4px; letter-spacing: -.35px; }
.zoomset { margin-left: auto; display: flex; align-items: center; padding-right: 4px; }
.zoomset svg + svg { margin-left: 10px; }
.zoomset em { width: 57px; margin-left: 15px; letter-spacing: 0; }
.zoomset .zc { color: #666; margin-left: 1px; }
.zoomset .zc + svg { margin-left: 14px; }
.outs { height: 31px; display: flex; gap: 12px; color: #555; padding-top: 8px; letter-spacing: -.4px; }
.outs span { border-bottom: 6px solid #ececee; height: 23px; line-height: 16px; }

.status { height: 24px; background: #1a76d2; color: #fff; display: flex; align-items: center; padding-left: 936px; }
.c1 { margin: 0 20px 0 5px; }
.dot { margin-right: 6px; }
.s1 { width: 152px; letter-spacing: -.38px; }
.add { margin: 0 4px 0 38px; }
.s2 { width: 122px; letter-spacing: -.25px; }
.s3 { margin-left: 18px; letter-spacing: -.1px; }
.gap { height: 8px; background: #000; }
.taskbar.second { width: 1440px; height: 32px; border: 0; overflow: hidden; }
.second .app svg, .second .start svg, .second .tv svg { margin-top: -8px; }
.second .find { width: 48px; }
.second .find svg { margin-top: -8px; }
.second .clock { margin: -6px 0 0 auto; }
```
